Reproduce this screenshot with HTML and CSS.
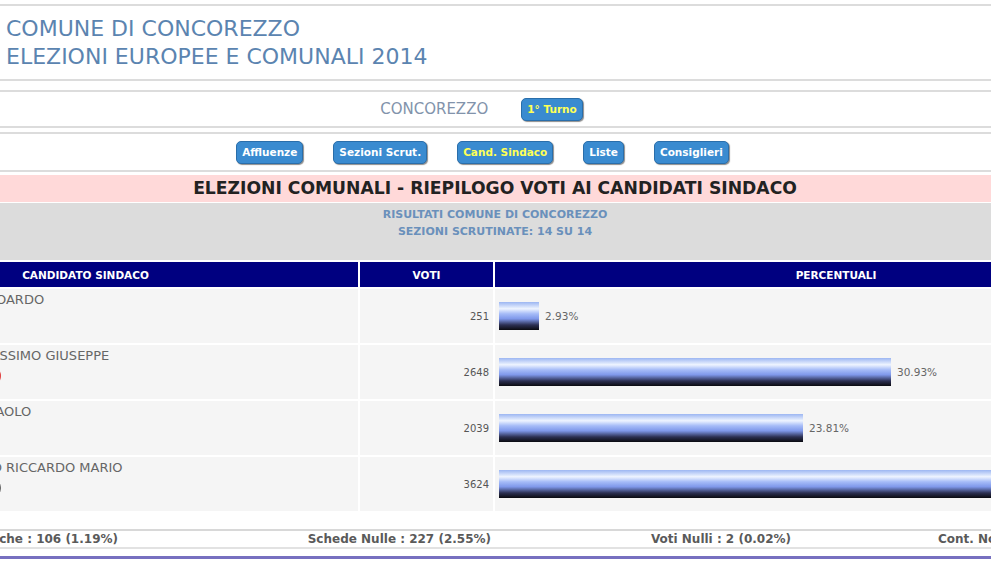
FILE: index.html
```html
<!DOCTYPE html>
<html lang="it">
<head>
    <meta charset="UTF-8">
    <meta name="viewport" content="width=device-width, initial-scale=1.0">
    <title>Elezioni Comunali 2014 - Concorezzo</title>
    <link rel="stylesheet" href="styles.css">
</head>
<body>

    <div class="riga-top"></div>
    <div class="intestazione">
        <div>COMUNE DI CONCOREZZO</div>
        <div>ELEZIONI EUROPEE E COMUNALI 2014</div>
    </div>

    <div class="barra-comune">
        <span class="nome-comune">CONCOREZZO</span>
        <a class="btn btn-sel" href="#">1° Turno</a>
    </div>

    <div class="menu">
        <a class="btn" href="#">Affluenze</a>
        <a class="btn" href="#">Sezioni Scrut.</a>
        <a class="btn btn-sel" href="#">Cand. Sindaco</a>
        <a class="btn" href="#">Liste</a>
        <a class="btn" href="#">Consiglieri</a>
    </div>

    <div class="pagina">
        <div class="titolo">ELEZIONI COMUNALI - RIEPILOGO VOTI AI CANDIDATI SINDACO</div>
        <div class="info">
            RISULTATI COMUNE DI CONCOREZZO<br>
            SEZIONI SCRUTINATE: 14 SU 14
        </div>

        <table class="risultati">
            <colgroup>
                <col class="col-nome">
                <col class="col-voti">
                <col>
            </colgroup>
            <tr class="testata">
                <th>CANDIDATO SINDACO</th>
                <th>VOTI</th>
                <th>PERCENTUALI</th>
            </tr>
            <tr>
                <td class="cand">
                    <div class="nome">GALBIATI EDOARDO</div>
                    <div class="loghi">
                        <span class="logo logo-verde"></span>
                    </div>
                </td>
                <td class="voti">251</td>
                <td class="perc"><span class="barra" style="width: 40px"></span><span class="val">2.93%</span></td>
            </tr>
            <tr>
                <td class="cand">
                    <div class="nome">COLOMBI MASSIMO GIUSEPPE</div>
                    <div class="loghi">
                        <span class="logo logo-blu"></span>
                        <span class="logo logo-verde"></span>
                        <span class="logo logo-blu"></span>
                        <span class="logo logo-rosso"></span>
                    </div>
                </td>
                <td class="voti">2648</td>
                <td class="perc"><span class="barra" style="width: 392px"></span><span class="val">30.93%</span></td>
            </tr>
            <tr>
                <td class="cand">
                    <div class="nome">CAPITANIO PAOLO</div>
                    <div class="loghi">
                        <span class="logo logo-blu"></span>
                        <span class="logo logo-verde"></span>
                    </div>
                </td>
                <td class="voti">2039</td>
                <td class="perc"><span class="barra" style="width: 304px"></span><span class="val">23.81%</span></td>
            </tr>
            <tr>
                <td class="cand">
                    <div class="nome">BORGONOVO RICCARDO MARIO</div>
                    <div class="loghi">
                        <span class="logo logo-verde"></span>
                        <span class="logo logo-blu"></span>
                        <span class="logo logo-rosso"></span>
                        <span class="logo logo-grigio"></span>
                    </div>
                </td>
                <td class="voti">3624</td>
                <td class="perc"><span class="barra" style="width: 536px"></span><span class="val">42.33%</span></td>
            </tr>
        </table>

        <div class="totali">
            <div>Schede Bianche : 106 (1.19%)</div>
            <div>Schede Nulle : 227 (2.55%)</div>
            <div>Voti Nulli : 2 (0.02%)</div>
            <div>Cont. Non Assegnate : 0 (0.00%)</div>
        </div>
        <div class="riga-fondo"></div>
    </div>

</body>
</html>
```

FILE: styles.css
```css
body {
    font-family: "DejaVu Sans", Verdana, sans-serif;
    margin: 0;
    background-color: #fff;
    overflow-x: hidden;
}
.riga-top {
    margin-top: 4px;
    border-top: 2px solid #dcdcdc;
}
.intestazione {
    padding: 9px 0 8px 6px;
    font-size: 22px;
    line-height: 28px;
    color: #5b84b0;
    border-bottom: 2px solid #dcdcdc;
    margin-bottom: 9px;
}
.barra-comune {
    display: flex;
    justify-content: center;
    align-items: center;
    gap: 33px;
    height: 34px;
    padding-right: 28px;
    border-top: 2px solid #dcdcdc;
    border-bottom: 2px solid #dcdcdc;
    margin-bottom: 4px;
}
.nome-comune {
    font-size: 15px;
    color: #8293ab;
}
.menu {
    display: flex;
    justify-content: center;
    align-items: center;
    gap: 30px;
    height: 36px;
    padding-right: 26px;
    border-top: 2px solid #dcdcdc;
    border-bottom: 2px solid #dcdcdc;
    margin-bottom: 2px;
}
.btn {
    display: inline-block;
    height: 21px;
    line-height: 21px;
    padding: 0 5px;
    font-size: 10.5px;
    font-weight: bold;
    color: #fff;
    text-decoration: none;
    background-color: #3a8bd0;
    border: 1px solid #2a6eaa;
    border-radius: 5px;
    box-shadow: 1px 1px 1px rgba(0, 0, 0, 0.45);
}
.btn-sel {
    color: #ffff55;
}
.pagina {
    width: 1364px;
    margin-left: -187px;
}
.titolo {
    height: 27px;
    line-height: 27px;
    margin-top: 3px;
    background-color: #ffd9d9;
    text-align: center;
    font-size: 17.2px;
    font-weight: bold;
    color: #222;
}
.info {
    height: 54px;
    padding-top: 3px;
    margin-top: 1px;
    background-color: #dcdcdc;
    text-align: center;
    font-size: 11px;
    line-height: 17px;
    font-weight: bold;
    color: #6a90bb;
}
.risultati {
    width: 1368px;
    margin: 0 -2px;
    table-layout: fixed;
    border-spacing: 2px;
}
.col-nome {
    width: 545px;
}
.col-voti {
    width: 133px;
}
.testata th {
    padding: 0;
    background-color: #000080;
    color: #fff;
    font-size: 10.5px;
    font-weight: bold;
}
.risultati td {
    background-color: #f5f5f5;
    padding: 0;
}
.risultati tr {
    height: 54px;
}
.risultati .testata {
    height: 25px;
}
.cand {
    vertical-align: top;
    padding: 3px 0 0 102px !important;
}
.nome {
    font-size: 13px;
    line-height: 16px;
    color: #666;
}
.loghi {
    display: flex;
    gap: 2px;
    margin-top: 2px;
}
.logo {
    width: 18px;
    height: 18px;
    border-radius: 50%;
    border: 1px solid #ccc;
    background-color: #fff;
}
.logo-verde {
    background-color: #3b9a45;
}
.logo-blu {
    background-color: #2f5fb0;
}
.logo-rosso {
    background-color: #fff;
    border: 2px solid #e04040;
    width: 16px;
    height: 16px;
}
.logo-grigio {
    background-color: #888;
    border-color: #666;
}
.voti {
    text-align: right;
    padding-right: 4px !important;
    font-size: 10px;
    color: #555;
}
.perc {
    padding-left: 4px !important;
    white-space: nowrap;
}
.barra {
    display: inline-block;
    height: 28px;
    vertical-align: middle;
    background: linear-gradient(to bottom, #9cb6f2 0%, #eef4ff 24%, #a6bcf8 42%, #7f98ea 60%, #2c3052 82%, #0a0a10 100%);
}
.val {
    margin-left: 6px;
    vertical-align: middle;
    font-size: 10.5px;
    color: #666;
}
.totali {
    display: grid;
    grid-template-columns: 310px 373px 300px 381px;
    margin-top: 16px;
    height: 16px;
    line-height: 16px;
    border-top: 2px solid #d8d8d8;
    border-bottom: 2px solid #e2e2e2;
    font-size: 12px;
    font-weight: bold;
    color: #5a5a5a;
}
.totali div {
    text-align: right;
    padding-right: 5px;
    white-space: nowrap;
}
.totali div:last-child {
    text-align: left;
    padding: 0 0 0 142px;
}
.riga-fondo {
    margin-top: 7px;
    border-top: 3px solid #7770c0;
}
```
